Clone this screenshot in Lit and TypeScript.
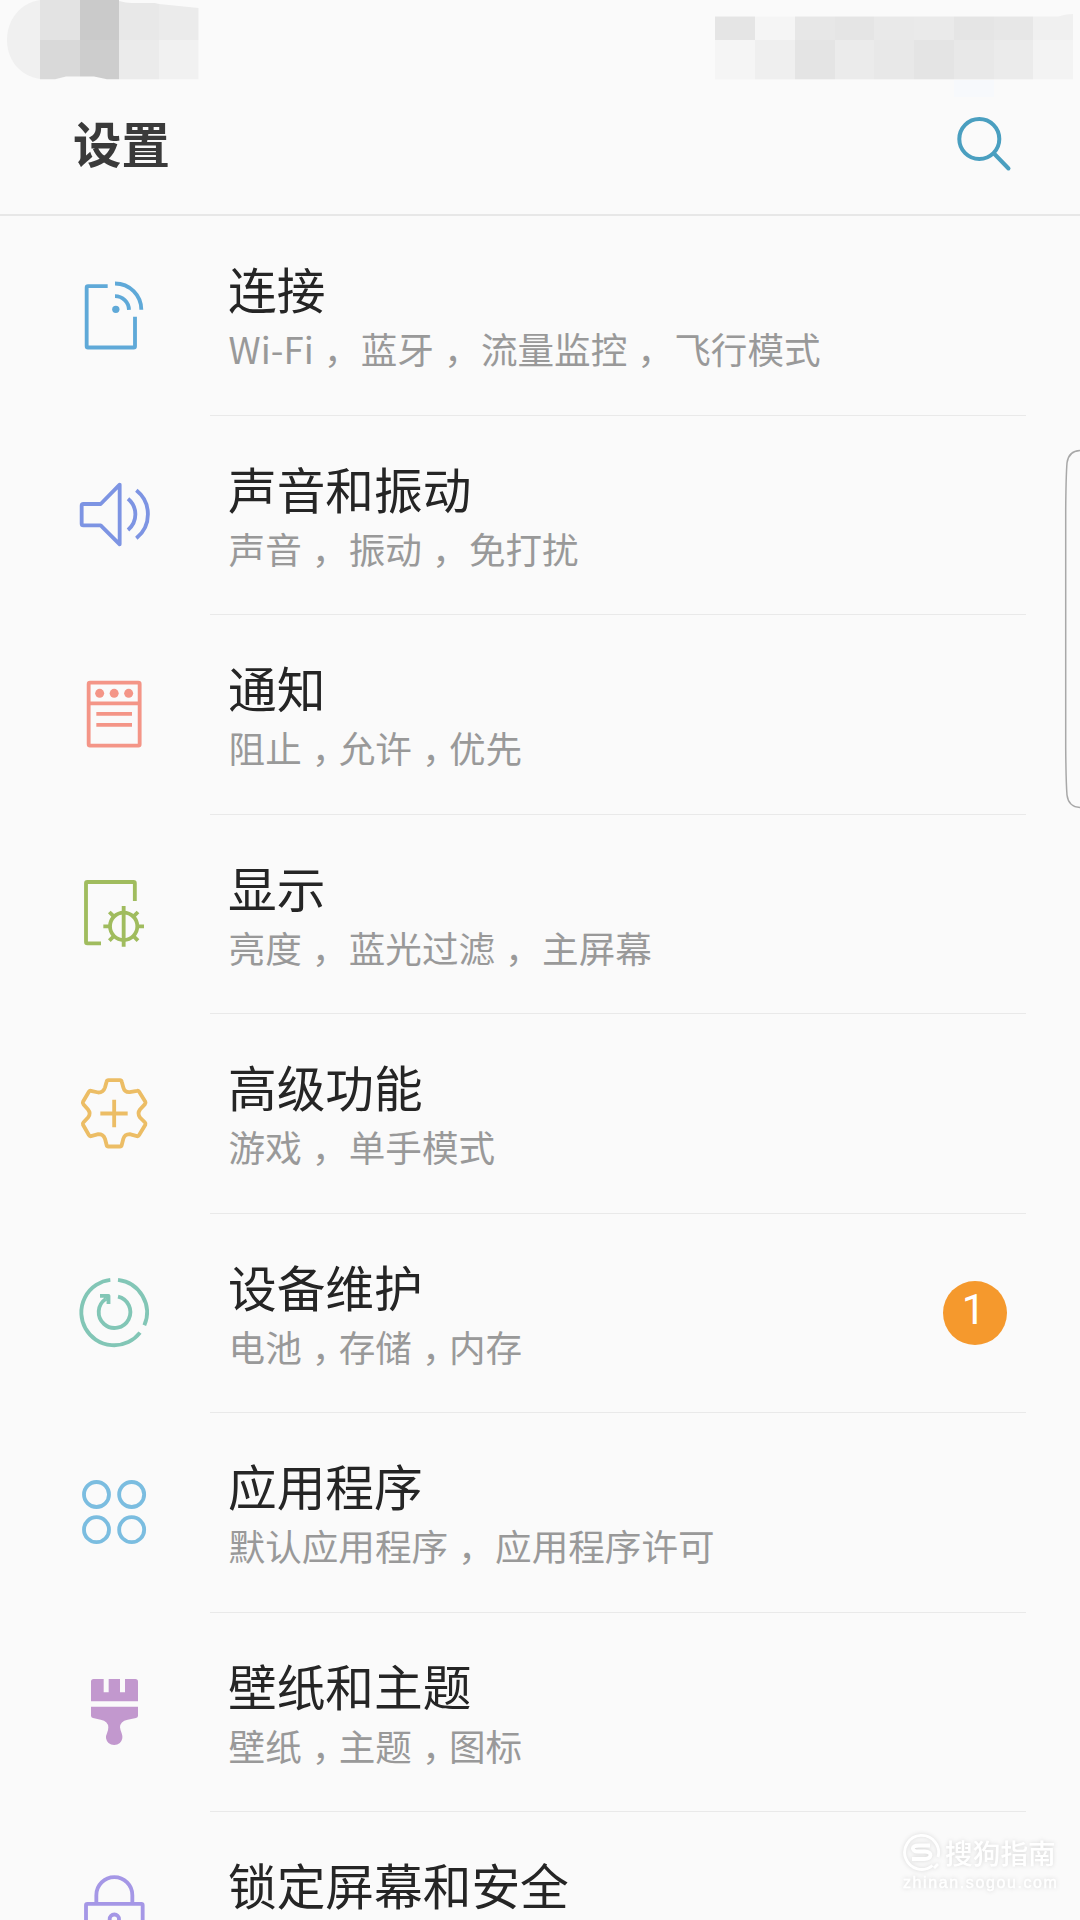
import { LitElement, html, svg, css } from "lit";
import type { SVGTemplateResult } from "lit";
import { customElement, property } from "lit/decorators.js";

type Separator = "wide" | "narrow";

interface Setting {
  title: string;
  parts: string[];
  separator: Separator;
  color: string;
  viewBox: string;
  icon: SVGTemplateResult;
  badge?: number;
}

const SETTINGS: Setting[] = [
  {
    title: "连接",
    parts: ["Wi-Fi", "蓝牙", "流量监控", "飞行模式"],
    separator: "wide",
    color: "#5fa9d8",
    viewBox: "42 76.5 240 240",
    icon: svg`
      <path d="M143 107H84Q80 107 80 111V287Q80 291 84 291H221Q225 291 225 287V199"/>
      <path d="M165 99A79 79 0 0 1 244 178M165 137A42 42 0 0 1 207 178"/>
      <circle cx="167.500" cy="176.500" r="11" fill="currentColor" stroke="none"/>`,
  },
  {
    title: "声音和振动",
    parts: ["声音", "振动", "免打扰"],
    separator: "wide",
    color: "#7d94e3",
    viewBox: "42 675 240 240",
    icon: svg`
      <path d="M179 704V883L122 826H70Q65 826 65 821V767Q65 762 70 762H122Z"/>
      <path d="M204 746A61 61 0 0 1 204 840M229 721A92 92 0 0 1 229 865"/>`,
  },
  {
    title: "通知",
    parts: ["阻止", "允许", "优先"],
    separator: "narrow",
    color: "#f49587",
    viewBox: "42 75 240 240",
    icon: svg`
      <rect x="86" y="98" width="153" height="189" rx="4"/>
      <path d="M86 160H239M109 191.500H216M109 224.500H216"/>
      <g fill="currentColor" stroke="none">
        <circle cx="119" cy="130" r="13.500"/><circle cx="162.500" cy="130" r="13.500"/><circle cx="206" cy="130" r="13.500"/>
      </g>`,
  },
  {
    title: "显示",
    parts: ["亮度", "蓝光过滤", "主屏幕"],
    separator: "wide",
    color: "#a0bc5e",
    viewBox: "42 672 240 240",
    icon: svg`
      <path d="M224.500 753V700Q224.500 696 220.500 696H82Q78 696 78 700V876Q78 880 82 880H123"/>
      <circle cx="191" cy="829" r="41"/>
      <path d="M191 768V890M130 829H150M232 829H252M148 786L162 800M234 786L220 800M148 872L162 858M234 872L220 858"/>`,
  },
  {
    title: "高级功能",
    parts: ["游戏", "单手模式"],
    separator: "wide",
    color: "#ecbd65",
    viewBox: "42 70.5 240 240",
    icon: svg`
      <path d="M145 89H180Q184 89 185 93L190 111Q194 126 209 125L231 121Q235 120 237 123L256 154Q258 158 255 161L240 177Q231 189 240 201L255 216Q258 219 256 223L237 254Q235 258 231 257L209 251Q194 251 190 265L185 284Q184 288 180 288H145Q141 288 140 284L135 265Q130 251 115 251L93 257Q89 258 87 254L69 223Q67 219 70 216L84 201Q94 189 84 177L70 161Q67 158 69 154L87 123Q89 120 93 121L115 126Q130 126 135 111L140 93Q141 89 145 89Z"/>
      <path d="M162.500 148V230M121 189H203"/>`,
  },
  {
    title: "设备维护",
    parts: ["电池", "存储", "内存"],
    separator: "narrow",
    color: "#82c6b6",
    viewBox: "42 669 240 240",
    badge: 1,
    icon: svg`
      <path d="M151 689.500A98.500 98.500 0 1 0 240 848M174 689.500A98.500 98.500 0 0 1 253 826"/>
      <path d="M174 740A47.500 47.500 0 1 1 137 747M120 737.500H145.500V762"/>
      <path fill="currentColor" stroke="none" d="M128 738H146V757Z"/>`,
  },
  {
    title: "应用程序",
    parts: ["默认应用程序", "应用程序许可"],
    separator: "wide",
    color: "#7bbde0",
    viewBox: "42 68.5 240 240",
    icon: svg`
      <circle cx="109.500" cy="133" r="37.500"/><circle cx="215" cy="133" r="37.500"/>
      <circle cx="109.500" cy="238.500" r="37.500"/><circle cx="215" cy="238.500" r="37.500"/>`,
  },
  {
    title: "壁纸和主题",
    parts: ["壁纸", "主题", "图标"],
    separator: "narrow",
    color: "#c298ce",
    viewBox: "42 666 240 240",
    icon: svg`
      <g fill="currentColor" stroke="none">
        <path d="M101 687H131V727H146V687H180V727H195V687H226Q234 687 234 695V754H93V695Q93 687 101 687Z"/>
        <path d="M93 770H234V797Q234 802 228 804L203 809Q180 814 180 832Q181 841 185 850Q188 858 187 865Q183 885 162.500 885Q142 885 138 865Q137 858 141 850Q145 841 145 832Q145 814 122 809L99 804Q93 802 93 797Z"/>
      </g>`,
  },
  {
    title: "锁定屏幕和安全",
    parts: [],
    separator: "wide",
    color: "#a597e6",
    viewBox: "222 5614.5 240 240",
    icon: svg`
      <path d="M289 5706V5684A53 53 0 0 1 397 5684V5706"/>
      <rect x="258" y="5710" width="170" height="134" rx="4"/>
      <circle cx="343" cy="5756" r="14"/>`,
  },
];

@customElement("status-strip")
class StatusStrip extends LitElement {
  static styles = css`
    :host { display: block; height: 98px; }
    .strip { display: block; }
  `;

  render() {
    const xs = [715, 755, 795, 835, 874, 914, 954, 994, 1033];
    const top = ["#e5e5e5", "#f5f5f5", "#e7e7e7", "#e5e5e5", "#e9e9e9", "#eaeaea", "#e5e5e5", "#e7e7e7", "#f0f0f0"];
    const bottom = ["#f5f5f5", "#efefef", "#e4e4e4", "#ebebeb", "#e8e8e8", "#e4e4e4", "#e8e8e8", "#ebebeb", "#f3f3f3"];
    const right = (i: number) => xs[i + 1] ?? 1073;
    return html`
      <svg class="strip" width="1080" height="98" viewBox="0 0 1080 98">
        <path fill="#f0f0f0" d="M40 0C20 3 7 20 7 40S20 76 40 79Z"/>
        <path fill="#e3e3e3" d="M40 0H80V40H40Z"/>
        <path fill="#cacaca" d="M80 0H119V40H80Z"/>
        <path fill="#e8e8e8" d="M119 1Q126 3 132 3H155L159 4V40H119Z"/>
        <path fill="#ebebeb" d="M159 4L198.500 8V40H159Z"/>
        <path fill="#d9d9d9" d="M40 40H80V76.500H66L55 79.300H40Z"/>
        <path fill="#cdcdcd" d="M80 40H119V79.300H107L94 76.500H80Z"/>
        <path fill="#ebebeb" d="M119 40H159V79.300H119Z"/>
        <path fill="#f1f1f1" d="M159 40H198.500V79.300H159Z"/>
        ${xs.map((x, i) => svg`
          <rect x=${x} y="16.500" width=${right(i) - x} height="23.500" fill=${top[i]}/>
          <rect x=${x} y="40" width=${right(i) - x} height="39.300" fill=${bottom[i]}/>`)}
        <path fill="#f0f0f0" d="M1058 17Q1064 14 1073 14V17Z"/>
        <rect x="954" y="80" width="40" height="17" fill="#f7f9fc"/>
      </svg>
    `;
  }
}

@customElement("setting-row")
class SettingRow extends LitElement {
  @property({ attribute: false }) setting!: Setting;

  static styles = css`
    :host {
      display: grid;
      grid-template-columns: 80px 816px;
      column-gap: 56px;
      box-sizing: border-box;
      height: 199.5px;
      padding-left: 74px;
    }
    .icon {
      align-self: center;
      display: block;
      width: 80px;
      height: 80px;
      fill: none;
      stroke: currentColor;
      stroke-width: 11.5;
      stroke-linejoin: round;
    }
    .body {
      display: flex;
      align-items: center;
      justify-content: space-between;
      box-sizing: border-box;
      padding: 0 19px 0 18px;
      border-bottom: 1px solid #e9e9e9;
    }
    .text { margin-top: 8px; }
    .title, .summary { height: 61px; line-height: 60px; white-space: nowrap; }
    .title { font-size: 48.7px; color: #252525; }
    .summary { padding-left: 0.6px; font-size: 36.6px; color: #999; }
    .comma { display: inline-block; box-sizing: border-box; padding-left: 10px; font-feature-settings: "halt" 1; }
    .wide { width: 47px; }
    .narrow { width: 37px; }
    .badge {
      display: flex;
      align-items: center;
      justify-content: center;
      width: 64px;
      height: 64px;
      border-radius: 50%;
      background: #f5992d;
      color: #fff;
      font: 42px/60px Roboto, sans-serif;
    }
    .count { margin: -5px 0 0 -3px; }
  `;

  render() {
    const s = this.setting;
    return html`
      <svg class="icon" viewBox=${s.viewBox} color=${s.color}>${s.icon}</svg>
      <div class="body">
        <div class="text">
          <div class="title">${s.title}</div>
          <div class="summary">${s.parts.map((part, i) => html`${i ? html`<span class="comma ${s.separator}">，</span>` : ""}<span>${part}</span>`)}</div>
        </div>
        ${s.badge ? html`<div class="badge"><span class="count">${s.badge}</span></div>` : ""}
      </div>
    `;
  }
}

@customElement("app-root")
class AppRoot extends LitElement {
  static styles = css`
    :host {
      display: block;
      position: relative;
      width: 1080px;
      height: 1920px;
      overflow: hidden;
      background: #fafafa;
      font-family: "Noto Sans CJK SC", sans-serif;
    }
    .header {
      display: flex;
      align-items: flex-start;
      justify-content: space-between;
      box-sizing: border-box;
      height: 118px;
      padding: 9px 68px 0 73px;
      border-bottom: 2px solid #e7e7e7;
    }
    .heading { margin: 0; font-size: 48.4px; line-height: 70px; font-weight: 700; color: #3a3a3a; }
    .search { display: block; margin-top: 8px; fill: none; stroke: #4a9fc0; stroke-width: 4; }
    .edge { position: absolute; left: 1060px; top: 446px; fill: none; stroke: #a8a8a8; stroke-width: 1.5; }
    .watermark {
      position: absolute;
      left: 903px;
      top: 1831px;
      color: #fff;
      filter: drop-shadow(0 0 2px rgba(0, 0, 0, 0.14));
    }
    .brand { display: flex; align-items: center; gap: 4px; height: 42px; font-size: 27.7px; font-weight: 500; }
    .logo { fill: none; stroke: currentColor; stroke-width: 2.8; }
    .site { font: 16px/20px "Liberation Sans", sans-serif; letter-spacing: 1.6px; -webkit-text-stroke: 0.4px #fff; }
  `;

  render() {
    return html`
      <status-strip></status-strip>
      <header class="header">
        <h1 class="heading">设置</h1>
        <svg class="search" width="56" height="58" viewBox="956 115 56 58">
          <circle cx="979.300" cy="139" r="20"/>
          <path d="M994 153.500L1008.500 168.500" stroke-linecap="round"/>
        </svg>
      </header>
      <main>
        ${SETTINGS.map((s) => html`<setting-row .setting=${s}></setting-row>`)}
      </main>
      <svg class="edge" width="20" height="366" viewBox="1060 446 20 366">
        <path d="M1081 450.500C1072 450.500 1068 455 1067 463Q1066 475 1065.700 510V748Q1066 783 1067 795C1068 803 1072 807.500 1081 807.500"/>
      </svg>
      <div class="watermark">
        <div class="brand">
          <svg class="logo" width="38" height="38" viewBox="0 0 38 38">
            <path d="M29.500 32.500A17 17 0 1 1 35 24M31 35L35 31" />
            <path stroke-width="3.800" d="M27 12.500H16C8 12.500 8 18.500 15 18.500H22C30 18.500 29 26 21 26H9"/>
          </svg>
          <span>搜狗指南</span>
        </div>
        <div class="site">zhinan.sogou.com</div>
      </div>
    `;
  }
}
